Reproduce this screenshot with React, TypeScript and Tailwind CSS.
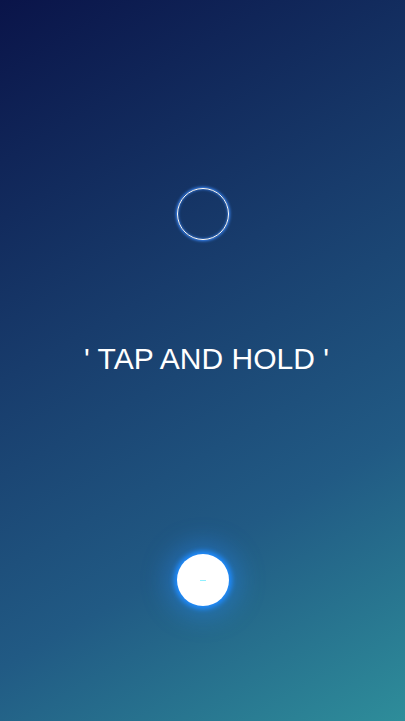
export default function App() {
  return (
    <main className="h-[721px] w-full overflow-hidden bg-[linear-gradient(150deg,#0a1449_0%,#183c6c_40%,#215a84_70%,#2e8d9a_100%)] flex flex-col items-center font-['Liberation_Sans',Arial,sans-serif]">
      {/* target ring */}
      <div className="mt-[188px] w-[52px] h-[52px] rounded-full border border-white shadow-[0_0_3px_1px_#3b8bff,inset_0_0_3px_#3b8bff]" />

      <p className="mt-[104px] pl-[8px] text-[30px] leading-[30px] text-white">
        &apos; TAP AND HOLD &apos;
      </p>

      {/* hold button */}
      <div className="mt-[180px] w-[52px] h-[52px] rounded-full bg-white shadow-[0_0_5px_3px_#1f8cff,0_0_26px_10px_rgba(40,140,255,0.4)] flex items-center justify-center">
        <span className="block w-[6px] h-px bg-[#8ff0ff]" />
      </div>
    </main>
  );
}
